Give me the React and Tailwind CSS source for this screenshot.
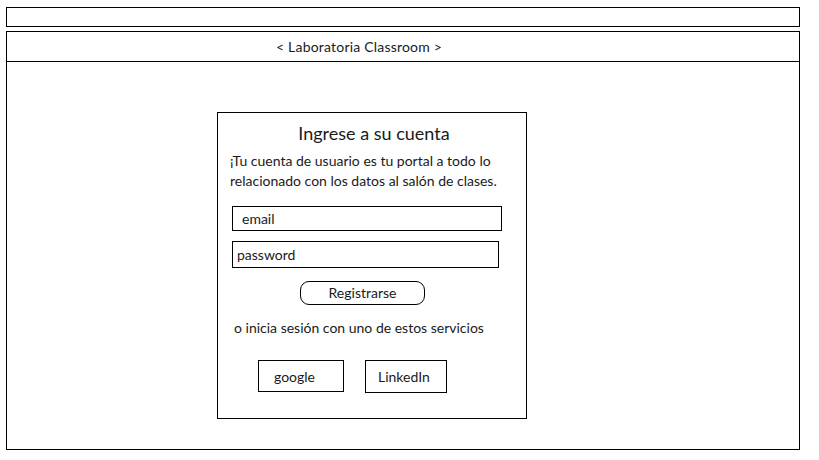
import React from 'react';

const App = () => (
  <div className="w-[819px] h-[460px] bg-white relative font-['Lato','Open_Sans',sans-serif] text-[#1a1a1a]">
    <div className="pt-[7px] pl-[6px]">
      <div className="w-[794px] h-[20px] border border-black" />

      <div className="mt-[4px] w-[794px] h-[419px] border border-black flex flex-col">
        <div className="h-[30px] border-b border-black flex items-center pl-[269px] text-[14px] tracking-[0.2px]">
          &lt; Laboratoria Classroom &gt;
        </div>

        <div className="pl-[210px] pt-[50px]">
          <div className="w-[310px] h-[307px] border border-black flex flex-col">
            <h1 className="mt-[8px] text-center text-[18px] leading-[24px] pl-[4px]">Ingrese a su cuenta</h1>
            <p className="mt-[6px] pl-[12px] text-[14px] leading-[20px]">
              ¡Tu cuenta de usuario es tu portal a todo lo
              <br />
              relacionado con los datos al salón de clases.
            </p>

            <div className="mt-[15px] ml-[14px] w-[270px] h-[25px] border border-black flex items-center pl-[9px] text-[14px]">
              email
            </div>
            <div className="mt-[10px] ml-[14px] w-[267px] h-[27px] border border-black flex items-center pl-[4px] text-[14px]">
              password
            </div>

            <button className="mt-[13px] ml-[82px] w-[125px] h-[24px] border border-black rounded-[9px] text-[14px] leading-none">
              Registrarse
            </button>

            <p className="mt-[14px] pl-[16px] text-[14px] leading-[18px]">o inicia sesión con uno de estos servicios</p>

            <div className="mt-[23px] flex gap-[21px] pl-[40px]">
              <div className="w-[86px] h-[32px] border border-black flex items-center pl-[15px] text-[14px]">google</div>
              <div className="w-[82px] h-[33px] border border-black flex items-center pl-[12px] text-[14px]">LinkedIn</div>
            </div>
          </div>
        </div>
      </div>
    </div>
  </div>
);

export default App;
